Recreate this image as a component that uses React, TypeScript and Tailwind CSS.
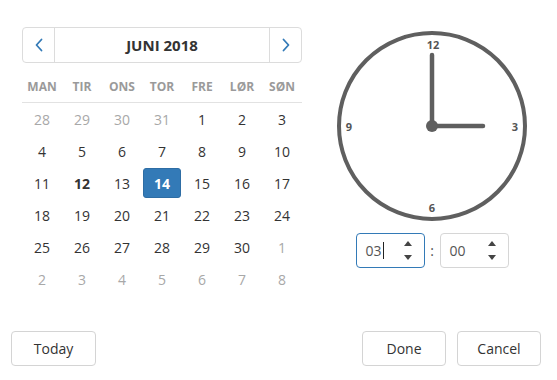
import { ReactNode } from "react";

const weekdays = ["MAN", "TIR", "ONS", "TOR", "FRE", "LØR", "SØN"];

const weeks: { d: number; muted?: boolean }[][] = [
  [{ d: 28, muted: true }, { d: 29, muted: true }, { d: 30, muted: true }, { d: 31, muted: true }, { d: 1 }, { d: 2 }, { d: 3 }],
  [{ d: 4 }, { d: 5 }, { d: 6 }, { d: 7 }, { d: 8 }, { d: 9 }, { d: 10 }],
  [{ d: 11 }, { d: 12 }, { d: 13 }, { d: 14 }, { d: 15 }, { d: 16 }, { d: 17 }],
  [{ d: 18 }, { d: 19 }, { d: 20 }, { d: 21 }, { d: 22 }, { d: 23 }, { d: 24 }],
  [{ d: 25 }, { d: 26 }, { d: 27 }, { d: 28 }, { d: 29 }, { d: 30 }, { d: 1, muted: true }],
  [2, 3, 4, 5, 6, 7, 8].map((d) => ({ d, muted: true })),
];

function Chevron({ dir }: { dir: "left" | "right" }) {
  return (
    <svg width="10" height="14" viewBox="0 0 10 14" fill="none">
      <path
        d={dir === "left" ? "M7.5 1.5 L2.5 7 L7.5 12.5" : "M2.5 1.5 L7.5 7 L2.5 12.5"}
        stroke="#337ab7"
        strokeWidth="1.8"
        strokeLinecap="round"
        strokeLinejoin="round"
      />
    </svg>
  );
}

function Spinner() {
  return (
    <div className="flex flex-col items-center gap-[9px]">
      <svg width="8" height="5" viewBox="0 0 8 5">
        <path d="M0 5 L4 0 L8 5 Z" fill="#444" />
      </svg>
      <svg width="8" height="5" viewBox="0 0 8 5">
        <path d="M0 0 L4 5 L8 0 Z" fill="#444" />
      </svg>
    </div>
  );
}

function TimeBox({ value, focused }: { value: string; focused?: boolean }) {
  return (
    <div
      className={`flex h-[35px] w-[69px] items-center justify-between rounded-[4px] border pl-[9px] pr-[12px] text-[14px] text-[#555] ${
        focused ? "border-[#337ab7]" : "border-[#d6d6d6]"
      }`}
    >
      <span className="flex items-center">
        {value}
        {focused && <span className="ml-[1px] inline-block h-[17px] w-[1px] bg-[#222]" />}
      </span>
      <Spinner />
    </div>
  );
}

function Button({ children, className }: { children: ReactNode; className?: string }) {
  return (
    <button
      className={`h-[35px] rounded-[4px] border border-[#d4d4d4] bg-white text-[14px] text-[#333] ${className ?? ""}`}
    >
      {children}
    </button>
  );
}

export default function App() {
  return (
    <main
      className="flex h-[380px] w-[557px] flex-col bg-white text-[#333]"
      style={{ fontFamily: '"Open Sans", "Noto Sans", sans-serif' }}
    >
      <div className="flex pl-[22px] pt-[27px]">
        <div className="w-[280px]">
          <div className="flex h-[36px] items-stretch rounded-[4px] border border-[#dcdcdc]">
            <div className="flex w-[32px] items-center justify-center border-r border-[#dcdcdc]">
              <Chevron dir="left" />
            </div>
            <div className="flex flex-1 items-center justify-center text-[15px] font-bold text-[#333]">JUNI 2018</div>
            <div className="flex w-[32px] items-center justify-center border-l border-[#dcdcdc]">
              <Chevron dir="right" />
            </div>
          </div>

          <div className="mt-[10px] grid h-[30px] grid-cols-7 border-b border-[#e2e2e2]">
            {weekdays.map((w) => (
              <div key={w} className="flex items-center justify-center pb-[1px] text-[12px] font-bold text-[#9a9a9a]">
                {w}
              </div>
            ))}
          </div>

          <div className="grid grid-cols-7">
            {weeks.flat().map((c, i) => {
              const selected = !c.muted && c.d === 14;
              const today = !c.muted && c.d === 12;
              return (
                <div key={i} className="flex h-[32px] items-center justify-center">
                  {selected ? (
                    <div className="flex h-[30px] w-[38px] items-center justify-center rounded-[3px] border border-[#2e6da4] bg-[#337ab7] text-[14px] font-bold text-white">
                      14
                    </div>
                  ) : (
                    <span
                      className={`text-[14px] ${c.muted ? "text-[#a8a8a8]" : "text-[#333]"} ${today ? "font-bold" : ""}`}
                    >
                      {c.d}
                    </span>
                  )}
                </div>
              );
            })}
          </div>
        </div>

        <div className="ml-[34px] mt-[3px] flex w-[192px] flex-col items-center">
          <svg width="192" height="192" viewBox="0 0 192 192">
            <circle cx="96" cy="96" r="93" fill="none" stroke="#5f5f5f" strokeWidth="4" />
            <line x1="96" y1="96" x2="96" y2="25" stroke="#5f5f5f" strokeWidth="4.5" strokeLinecap="round" />
            <line x1="96" y1="96" x2="147" y2="96" stroke="#5f5f5f" strokeWidth="4.5" strokeLinecap="round" />
            <circle cx="96" cy="96" r="6" fill="#5f5f5f" />
            <g fill="#555" fontSize="11" fontWeight="700" textAnchor="middle" fontFamily="Open Sans, sans-serif">
              <text x="97" y="19">12</text>
              <text x="13" y="101">9</text>
              <text x="179" y="101">3</text>
              <text x="96" y="182">6</text>
            </g>
          </svg>
          <div className="mt-[11px] flex items-center">
            <TimeBox value="03" focused />
            <span className="w-[15px] text-center text-[14px] text-[#555]">:</span>
            <TimeBox value="00" />
          </div>
        </div>
      </div>

      <div className="mt-auto flex items-center px-[11px] pb-[14px] pr-[16px]">
        <Button className="w-[85px]">Today</Button>
        <div className="flex-1" />
        <Button className="w-[84px]">Done</Button>
        <Button className="ml-[11px] w-[84px]">Cancel</Button>
      </div>
    </main>
  );
}
